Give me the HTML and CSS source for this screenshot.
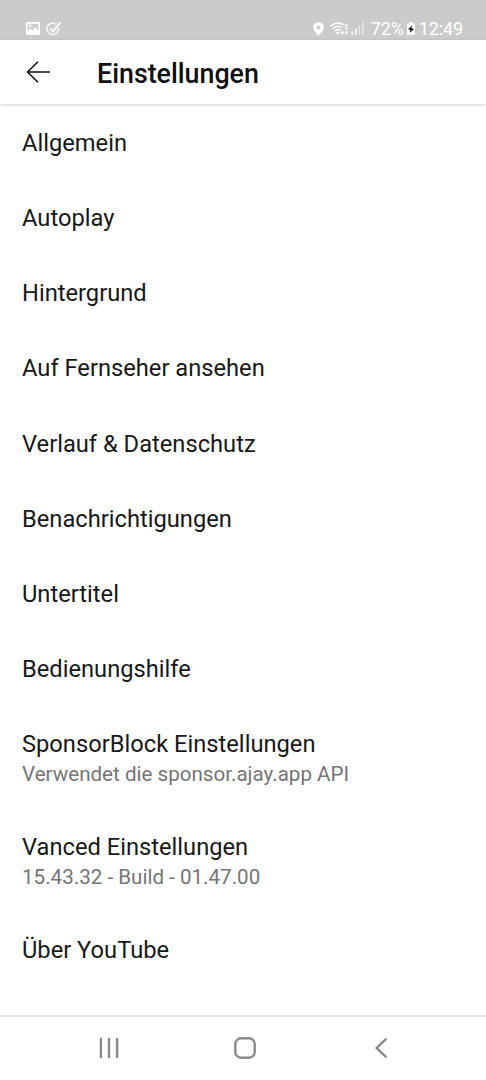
FILE: index.html
```html
<!DOCTYPE html>
<html lang="de">
<head>
    <meta charset="UTF-8" />
    <meta name="viewport" content="width=device-width, initial-scale=1.0">
    <title>Einstellungen</title>
    <link rel="stylesheet" href="styles.css">
</head>
<body>

<div class="status-bar">
    <svg class="icon-picture" width="14" height="13" viewBox="0 0 14 13">
        <path fill="#fff" fill-rule="evenodd" d="M1 0h12a1 1 0 0 1 1 1v11a1 1 0 0 1-1 1H1a1 1 0 0 1-1-1V1a1 1 0 0 1 1-1zM1.6 1.7v7.6L4.2 6.3l2.2 2.2L9.3 5l3.1 4V1.7z"/>
        <circle cx="4.2" cy="3.9" r="1.3" fill="#fff"/>
    </svg>
    <svg class="icon-check" width="16" height="16" viewBox="0 0 16 16" fill="none" stroke="#f4f4f4">
        <path stroke-width="1.7" d="M10.6 3.5A5.8 5.8 0 1 0 12.5 7"/>
        <path stroke-width="2.2" d="M4.2 7.4l2.7 3.1L14.5 1.2"/>
    </svg>
    <div class="status-right">
        <svg class="icon-pin" width="11" height="14" viewBox="0 0 11 14">
            <path fill="#fff" fill-rule="evenodd" d="M5.5 0A5.3 5.3 0 0 0 .2 5.3C.2 8.6 5.5 13.8 5.5 13.8S10.8 8.6 10.8 5.3A5.3 5.3 0 0 0 5.5 0zM5.5 3.4a2 2 0 1 1 0 4 2 2 0 0 1 0-4z"/>
        </svg>
        <svg class="icon-wifi" width="19" height="14" viewBox="0 0 19 14" fill="none" stroke="#fff" stroke-width="1.4">
            <path d="M.6 4.3C4.5.1 10.2 0 13.6 3.2M2.6 6.7C5.3 3.8 9.3 3.6 12 5.8M4.8 9C6.6 7.2 8.7 7.1 10.4 8.4"/>
            <path fill="#fff" stroke="none" d="M5.8 10.6q1.8-1.5 3.6 0L7.6 12.8zM16.3 1.5l2.2 2.8h-4.4zM14.1 5.5h4.4l-2.2 2.3zM11.7 8.3h1.3v2h1.3L12.3 13l-2-2.7h1.4zM16.3 8.5l2 2.2h-1.3V13h-1.4v-2.3h-1.3z"/>
        </svg>
        <svg class="icon-signal" width="14" height="13" viewBox="0 0 14 13">
            <path fill="#fff" d="M.5 9.5h1.5V13H.5zM4 7h1.5v6H4z"/>
            <path fill="#fff" opacity=".55" d="M7.5 3.5H9V13H7.5zM11 0h1.5v13H11z"/>
        </svg>
        <span class="battery-text">72%</span>
        <svg class="icon-battery" width="8" height="13" viewBox="0 0 8 13">
            <path fill="#fff" d="M2.5 0h3v1.5H8V13H0V1.5h2.5z"/>
            <path fill="#111" d="M4.9 3.6L1 7.2l2.4.8-.6 2.8L7 6.9l-2.5-.7z"/>
        </svg>
        <span class="clock">12:49</span>
    </div>
</div>

<div class="toolbar">
    <svg class="back-arrow" width="25" height="22" viewBox="0 0 25 22" fill="none" stroke="#111" stroke-width="1.5">
        <path d="M24 11H1.5M12 .7L1.5 11 12 21.3"/>
    </svg>
    <h1>Einstellungen</h1>
</div>

<div class="settings-list">
    <div class="item"><div class="item-title">Allgemein</div></div>
    <div class="item"><div class="item-title">Autoplay</div></div>
    <div class="item"><div class="item-title">Hintergrund</div></div>
    <div class="item"><div class="item-title">Auf Fernseher ansehen</div></div>
    <div class="item"><div class="item-title">Verlauf &amp; Datenschutz</div></div>
    <div class="item"><div class="item-title">Benachrichtigungen</div></div>
    <div class="item"><div class="item-title">Untertitel</div></div>
    <div class="item"><div class="item-title">Bedienungshilfe</div></div>
    <div class="item">
        <div class="item-title">SponsorBlock Einstellungen</div>
        <div class="item-summary">Verwendet die sponsor.ajay.app API</div>
    </div>
    <div class="item">
        <div class="item-title">Vanced Einstellungen</div>
        <div class="item-summary">15.43.32 - Build - 01.47.00</div>
    </div>
    <div class="item"><div class="item-title">Über YouTube</div></div>
</div>

<div class="nav-bar">
    <svg width="22" height="22" viewBox="0 0 22 22" fill="none" stroke="#8a8a8a" stroke-width="2.4" stroke-linecap="round">
        <path d="M2.9 2v18M11 2v18M19.1 2v18"/>
    </svg>
    <svg width="22" height="22" viewBox="0 0 22 22" fill="none" stroke="#8a8a8a" stroke-width="2.4">
        <rect x="1.3" y="1.3" width="19.4" height="19.4" rx="5.8"/>
    </svg>
    <svg width="22" height="22" viewBox="0 0 22 22" fill="none" stroke="#8a8a8a" stroke-width="2.4">
        <path d="M16.4 1.6L6.6 11l9.8 9.4"/>
    </svg>
</div>

</body>
</html>
```
FILE: styles.css
```css
body {
    margin: 0;
    height: 1080px;
    display: flex;
    flex-direction: column;
    font-family: Roboto, sans-serif;
    background-color: #fff;
    color: #181818;
    overflow: hidden;
}

svg {
    display: block;
    flex: none;
}

.status-bar {
    height: 40px;
    box-sizing: border-box;
    padding: 17px 23px 0 26px;
    display: flex;
    align-items: center;
    background-color: #cbcbcb;
    color: #fff;
    font-size: 18px;
    flex: none;
}

.icon-check {
    margin-left: 6px;
}

.status-right {
    display: flex;
    align-items: center;
    margin-left: auto;
}

.icon-wifi {
    margin-left: 6px;
}

.icon-signal {
    margin-left: 2px;
}

.battery-text {
    margin-left: 6px;
    letter-spacing: -0.2px;
}

.icon-battery {
    margin-left: 3px;
}

.clock {
    margin-left: 4px;
    letter-spacing: -0.1px;
}

.toolbar {
    position: relative;
    height: 64px;
    display: flex;
    align-items: center;
    padding-left: 26px;
    box-shadow: 0 1px 3px rgba(0, 0, 0, 0.18);
    flex: none;
}

.back-arrow {
    margin-bottom: 1px;
}

.toolbar h1 {
    margin: 3px 0 0 46px;
    font-size: 26.8px;
    line-height: 32px;
    font-weight: 500;
    color: #0f0f0f;
}

.settings-list {
    flex: 1;
    padding-top: 2px;
}

.item {
    padding: 23px 22px 23.15px;
}

.item-title {
    font-size: 23.7px;
    line-height: 29px;
}

.item-summary {
    margin-bottom: -2px;
    font-size: 20.6px;
    line-height: 30px;
    color: #757575;
}

.nav-bar {
    height: 61px;
    padding: 0 94px 2px 98px;
    border-top: 2px solid #e6e6e6;
    display: flex;
    align-items: center;
    justify-content: space-between;
    flex: none;
}
```
